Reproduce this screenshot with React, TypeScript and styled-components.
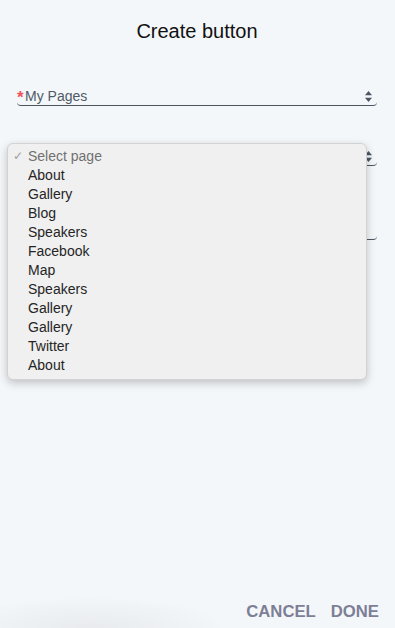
import React from "react";
import styled, { createGlobalStyle } from "styled-components";

const GlobalStyle = createGlobalStyle`
  html, body {
    margin: 0;
    padding: 0;
    background: #f4f7fa;
    font-family: "Liberation Sans", Arial, sans-serif;
  }
`;

const Screen = styled.div`
  position: relative;
  width: 395px;
  height: 628px;
  display: flex;
  flex-direction: column;
  box-sizing: border-box;
  padding: 0 18px 0 17px;
  overflow: hidden;
`;

const Title = styled.h1`
  margin: 20px 0 0;
  font-size: 20px;
  line-height: 22px;
  font-weight: 400;
  color: #111;
  text-align: center;
`;

const Form = styled.div`
  display: flex;
  flex-direction: column;
  margin-top: 45px;
`;

const Field = styled.div<{ $gap?: number }>`
  display: flex;
  align-items: center;
  height: 18px;
  margin-top: ${(p) => p.$gap ?? 0}px;
  border-bottom: 1px solid #4b5662;
  border-radius: 0 0 4px 4px;
  padding-right: 5px;
`;

const Required = styled.span`
  color: #f0505a;
  font-size: 17px;
  font-weight: 700;
  line-height: 18px;
  width: 8px;
  margin-top: 3px;
`;

const Label = styled.span`
  flex: 1;
  font-size: 14px;
  line-height: 18px;
  color: #4f5a66;
`;

const Arrows = () => (
  <svg width="7" height="11" viewBox="0 0 7 11">
    <path d="M3.5 0 L7 4.2 H0 Z" fill="#4b5662" />
    <path d="M3.5 11 L7 6.8 H0 Z" fill="#4b5662" />
  </svg>
);

const Menu = styled.ul`
  position: absolute;
  top: 143px;
  left: 7px;
  width: 360px;
  margin: 0;
  padding: 3px 0 4px;
  list-style: none;
  box-sizing: border-box;
  background: #f0f0f0;
  border: 1px solid #d2d2d2;
  border-radius: 6px;
  box-shadow: 0 3px 8px rgba(0, 0, 0, 0.22);
`;

const Option = styled.li<{ $placeholder?: boolean }>`
  position: relative;
  height: 19px;
  line-height: 19px;
  padding-left: 20px;
  font-size: 14px;
  color: ${(p) => (p.$placeholder ? "#707070" : "#252525")};
`;

const Check = styled.span`
  position: absolute;
  left: 5px;
  top: 0;
  font-size: 12px;
  color: #a0a0a0;
`;

const Spacer = styled.div`
  flex: 1;
`;

const Footer = styled.div`
  display: flex;
  justify-content: flex-end;
  gap: 15px;
  margin-right: -2px;
  padding-bottom: 6px;
`;

const ActionButton = styled.button`
  background: none;
  border: none;
  padding: 0;
  font-family: "Liberation Sans", Arial, sans-serif;
  font-size: 16.7px;
  font-weight: 700;
  line-height: 20px;
  color: #7d7f96;
  cursor: pointer;
`;

const CornerShade = styled.div`
  position: absolute;
  left: -40px;
  bottom: -30px;
  width: 260px;
  height: 60px;
  border-radius: 50%;
  background: radial-gradient(ellipse at center, rgba(205, 206, 210, 0.3) 0%, rgba(220, 222, 226, 0.15) 55%, rgba(244, 247, 250, 0) 75%);
  pointer-events: none;
`;

const pages = [
  "About",
  "Gallery",
  "Blog",
  "Speakers",
  "Facebook",
  "Map",
  "Speakers",
  "Gallery",
  "Gallery",
  "Twitter",
  "About",
];

const App = () => {
  return (
    <>
      <GlobalStyle />
      <Screen>
        <Title>Create button</Title>
        <Form>
          <Field>
            <Required>*</Required>
            <Label>My Pages</Label>
            <Arrows />
          </Field>
          <Field $gap={41}>
            <Label />
            <Arrows />
          </Field>
          <Field $gap={55}>
            <Label />
          </Field>
        </Form>
        <Spacer />
        <Footer>
          <ActionButton>CANCEL</ActionButton>
          <ActionButton>DONE</ActionButton>
        </Footer>
        <CornerShade />
        <Menu>
          <Option $placeholder>
            <Check>✓</Check>
            Select page
          </Option>
          {pages.map((name, index) => (
            <Option key={index}>{name}</Option>
          ))}
        </Menu>
      </Screen>
    </>
  );
};

export default App;
